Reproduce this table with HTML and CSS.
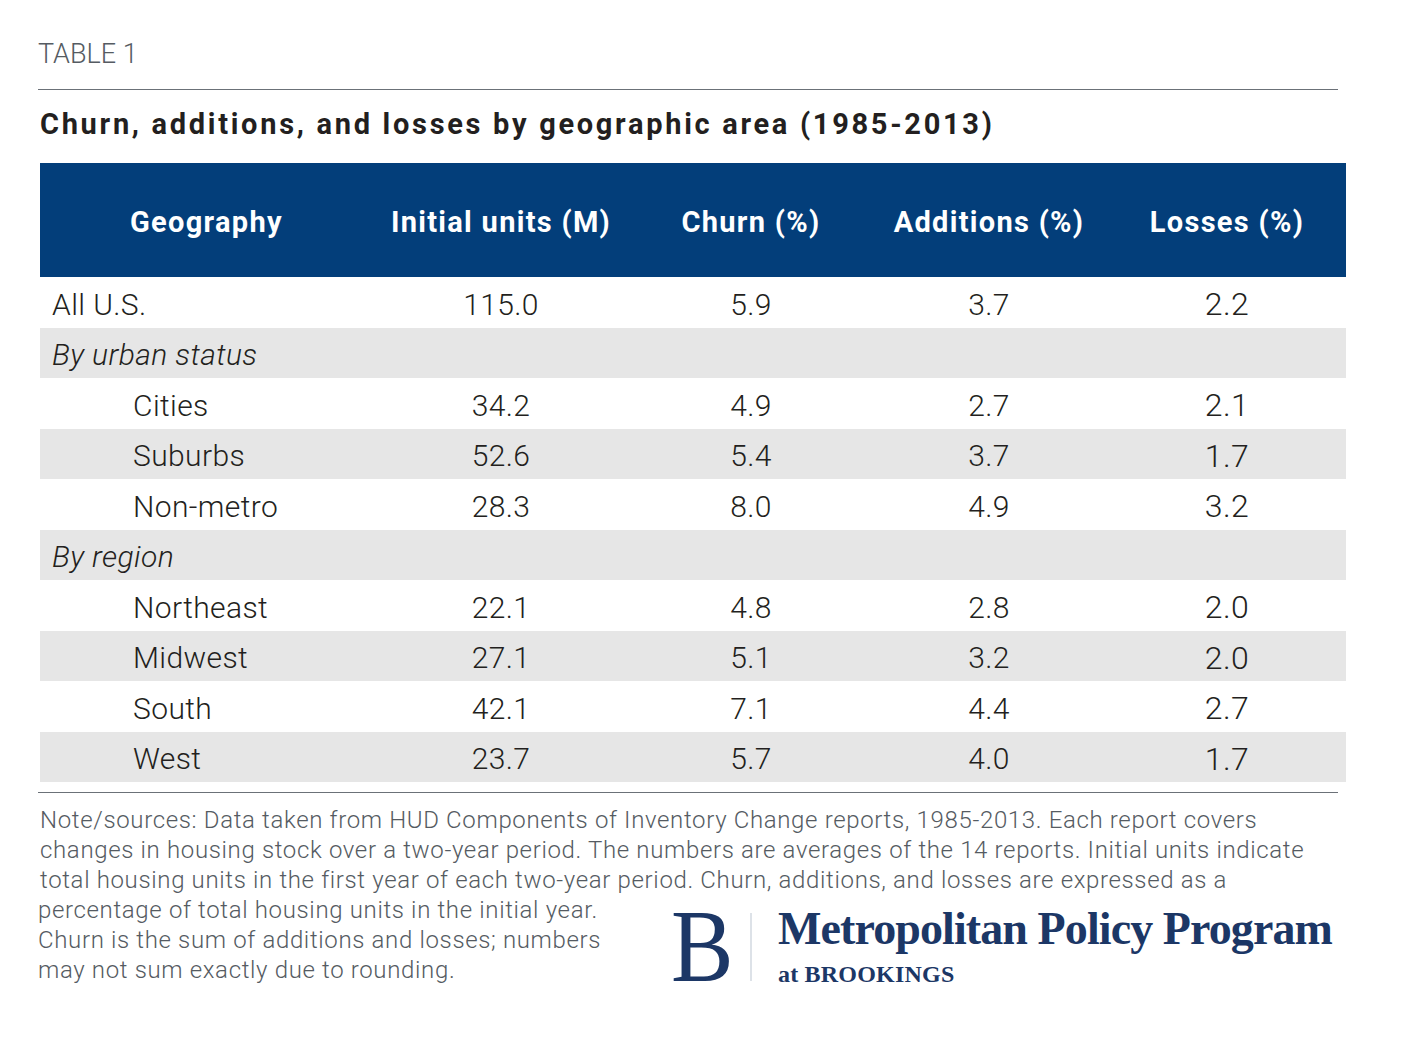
FILE: index.html
```html
<!DOCTYPE html>
<html lang="en">
<head>
<meta charset="utf-8">
<title>Table 1</title>
<link rel="stylesheet" href="styles.css">
</head>
<body>
<div class="page">
  <div class="label">TABLE 1</div>
  <hr class="rule">
  <h1 class="title">Churn, additions, and losses by geographic area (1985-2013)</h1>
  <div class="table">
    <div class="head">
      <div class="hc first">Geography</div>
      <div class="hc">Initial units (M)</div>
      <div class="hc">Churn (%)</div>
      <div class="hc">Additions (%)</div>
      <div class="hc last">Losses (%)</div>
    </div>
    <div class="row"><div class="c name">All U.S.</div><div class="c">115.0</div><div class="c">5.9</div><div class="c">3.7</div><div class="c last">2.2</div></div>
    <div class="row alt"><div class="c name group">By urban status</div><div class="c"></div><div class="c"></div><div class="c"></div><div class="c last"></div></div>
    <div class="row"><div class="c name sub">Cities</div><div class="c">34.2</div><div class="c">4.9</div><div class="c">2.7</div><div class="c last">2.1</div></div>
    <div class="row alt"><div class="c name sub">Suburbs</div><div class="c">52.6</div><div class="c">5.4</div><div class="c">3.7</div><div class="c last">1.7</div></div>
    <div class="row"><div class="c name sub">Non-metro</div><div class="c">28.3</div><div class="c">8.0</div><div class="c">4.9</div><div class="c last">3.2</div></div>
    <div class="row alt"><div class="c name group">By region</div><div class="c"></div><div class="c"></div><div class="c"></div><div class="c last"></div></div>
    <div class="row"><div class="c name sub">Northeast</div><div class="c">22.1</div><div class="c">4.8</div><div class="c">2.8</div><div class="c last">2.0</div></div>
    <div class="row alt"><div class="c name sub">Midwest</div><div class="c">27.1</div><div class="c">5.1</div><div class="c">3.2</div><div class="c last">2.0</div></div>
    <div class="row"><div class="c name sub">South</div><div class="c">42.1</div><div class="c">7.1</div><div class="c">4.4</div><div class="c last">2.7</div></div>
    <div class="row alt"><div class="c name sub">West</div><div class="c">23.7</div><div class="c">5.7</div><div class="c">4.0</div><div class="c last">1.7</div></div>
  </div>
  <hr class="rule bottom">
  <p class="note">Note/sources: Data taken from HUD Components of Inventory Change reports, 1985-2013. Each report covers<br>changes in housing stock over a two-year period. The numbers are averages of the 14 reports. Initial units indicate<br>total housing units in the first year of each two-year period. Churn, additions, and losses are expressed as a</p>
  <div class="footer">
    <p class="note cont">percentage of total housing units in the initial year.<br>Churn is the sum of additions and losses; numbers<br>may not sum exactly due to rounding.</p>
    <div class="logo">
      <span class="logo-b">B</span>
      <span class="logo-bar"></span>
      <div class="logo-text">
        <span class="logo-main">Metropolitan Policy Program</span>
        <span class="logo-sub">at BROOKINGS</span>
      </div>
    </div>
  </div>
</div>
</body>
</html>
```
FILE: styles.css
```css
html, body {
  margin: 0;
  padding: 0;
  background: #ffffff;
}
body {
  font-family: Roboto, "Liberation Sans", sans-serif;
  color: #231f20;
}
.page {
  width: 1306px;
  padding: 38px 0 0 40px;
}
.label {
  margin-left: -2px;
  font-size: 27px;
  font-weight: 300;
  color: #555b62;
  letter-spacing: 0;
  line-height: 32px;
  height: 32px;
}
.rule {
  margin: 19px 0 0 -2px;
  width: 1300px;
  border: 0;
  border-top: 1px solid #6b7178;
  height: 0;
}
.title {
  margin: 16px 0 0 0;
  font-size: 29px;
  font-weight: 700;
  letter-spacing: 2.7px;
  line-height: 36px;
  color: #231f20;
}
.table {
  margin-top: 21px;
  width: 1306px;
}
.head {
  display: grid;
  grid-template-columns: 342px 238px 262px 214px 250px;
  height: 114px;
  align-items: center;
  background: #033e7a;
}
.hc {
  text-align: center;
  color: #ffffff;
  font-size: 29px;
  font-weight: 700;
  letter-spacing: 1.3px;
  padding-top: 4px;
}
.hc.first {
  text-align: left;
  padding-left: 90px;
}
.hc.last, .c.last {
  padding-left: 12px;
}
.row {
  display: grid;
  grid-template-columns: 342px 238px 262px 214px 250px;
  height: 50.5px;
  align-items: center;
  background: #ffffff;
}
.row.alt {
  background: #e6e6e6;
}
.c {
  text-align: center;
  font-size: 30px;
  font-weight: 300;
  letter-spacing: 0.4px;
  color: #231f20;
  padding-top: 4px;
}
.c.last {
  font-size: 32px;
}
.c.name {
  text-align: left;
  padding-left: 12px;
}
.c.name.sub {
  padding-left: 93px;
}
.c.group {
  font-style: italic;
}
.rule.bottom {
  margin-top: 10px;
}
.note {
  margin: 12px 0 0 0;
  font-size: 24px;
  font-weight: 300;
  color: #555b62;
  line-height: 30px;
  letter-spacing: 0.65px;
}
.footer {
  display: flex;
  align-items: flex-start;
  margin-left: -2px;
}
.note.cont {
  margin: 0;
  width: 620px;
  flex: none;
}
.logo {
  display: flex;
  align-items: flex-start;
  margin-left: 13px;
  margin-top: 11px;
  color: #1c3766;
  font-family: "Liberation Serif", "Times New Roman", serif;
  white-space: nowrap;
}
.logo-b {
  display: block;
  font-size: 104px;
  line-height: 80px;
  height: 80px;
  transform: scaleX(0.9);
  transform-origin: left center;
  width: 60px;
}
.logo-bar {
  display: block;
  width: 2px;
  height: 68px;
  margin: 7px 0 0 19px;
  background: #dde2e8;
}
.logo-text {
  display: flex;
  flex-direction: column;
  margin-left: 26px;
}
.logo-main {
  font-size: 46px;
  font-weight: 700;
  line-height: 46px;
  letter-spacing: -0.9px;
}
.logo-sub {
  font-size: 24px;
  font-weight: 700;
  line-height: 26px;
  margin-top: 9px;
  letter-spacing: 0.2px;
}
```
